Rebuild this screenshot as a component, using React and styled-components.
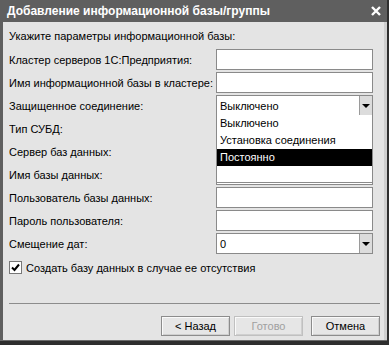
import React from "react";
import styled, { createGlobalStyle } from "styled-components";

const GlobalStyle = createGlobalStyle`
  html, body {
    margin: 0;
    padding: 0;
    background: #ffffff;
  }
  * {
    box-sizing: border-box;
  }
`;

const Shadow = styled.div`
  width: 389px;
  height: 345px;
  background: #2e2e2e;
  padding: 0 2px 4px 0;
  font-family: "Liberation Sans", Arial, sans-serif;
  font-size: 11px;
  color: #000;
`;

const Frame = styled.div`
  width: 100%;
  height: 100%;
  display: flex;
  flex-direction: column;
  background: #5f5f5f;
  border-bottom: 1px solid #6a6a6a;
`;

const TitleBar = styled.div`
  height: 22px;
  display: flex;
  align-items: center;
  justify-content: space-between;
  padding: 0 6px 0 7px;
  color: #fff;
  font-weight: bold;
  font-size: 12px;
`;

const Body = styled.div`
  flex: 1;
  display: flex;
  flex-direction: column;
  margin-left: 3px;
  border-right: 3px solid #cfcfcf;
  background: #e4e4e4;
  padding: 5px 8px 3px 6px;
`;

const Heading = styled.div`
  height: 18px;
  line-height: 18px;
  margin-bottom: 4px;
`;

const Form = styled.div`
  display: grid;
  grid-template-columns: minmax(0, 1fr) 157px;
  grid-auto-rows: 21px;
  row-gap: 2px;
  align-items: center;
  padding-right: 3px;
`;

const Label = styled.div`
  white-space: nowrap;
  overflow: hidden;
`;

const Field = styled.div`
  position: relative;
  height: 21px;
  background: #fff;
  border: 1px solid #8a8a8a;
  display: flex;
  align-items: center;
  padding-left: 3px;
`;

const FieldText = styled.span`
  flex: 1;
`;

const DropButton = styled.div`
  width: 13px;
  height: 100%;
  background: #dcdcdc;
  border-left: 1px solid #9a9a9a;
  display: flex;
  align-items: center;
  justify-content: center;
`;

const Arrow = styled.div`
  width: 0;
  height: 0;
  border-left: 4px solid transparent;
  border-right: 4px solid transparent;
  border-top: 4px solid #000;
`;

const List = styled.div`
  position: absolute;
  top: 100%;
  left: -1px;
  right: -1px;
  height: 68px;
  background: #fff;
  border: 1px solid #8a8a8a;
  border-top: none;
  z-index: 2;
`;

const Item = styled.div`
  height: 17px;
  line-height: 17px;
  padding-left: 3px;
  background: ${(p) => (p.$active ? "#000" : "transparent")};
  color: ${(p) => (p.$active ? "#fff" : "#000")};
`;

const CheckRow = styled.label`
  display: flex;
  align-items: center;
  gap: 4px;
  margin-top: 7px;
  height: 13px;
`;

const Box = styled.span`
  width: 13px;
  height: 13px;
  background: #fff;
  border: 1px solid #777;
  display: flex;
  align-items: center;
  justify-content: center;
`;

const Separator = styled.div`
  margin-top: auto;
  height: 1px;
  background: #8c8c8c;
  margin-right: -4px;
`;

const Buttons = styled.div`
  display: flex;
  justify-content: flex-end;
  margin-top: 12px;
  margin-right: -4px;
  margin-bottom: 1px;
`;

const Button = styled.button`
  width: 69px;
  height: 20px;
  margin-left: ${(p) => p.$gap}px;
  font: inherit;
  color: ${(p) => (p.disabled ? "#a0a0a0" : "#000")};
  background: #e6e6e6;
  border: 1px solid ${(p) => (p.disabled ? "#c0c0c0" : "#8c8c8c")};
  box-shadow: inset 1px 1px #fafafa, inset -1px -1px #cfcfcf;
  padding: 0;
`;

const rows = [
  { label: "Кластер серверов 1С:Предприятия:", field: true },
  { label: "Имя информационной базы в кластере:", field: true },
  { label: "Защищенное соединение:", combo: "Выключено", open: true },
  { label: "Тип СУБД:", field: true },
  { label: "Сервер баз данных:", field: true },
  { label: "Имя базы данных:", field: true },
  { label: "Пользователь базы данных:", field: true },
  { label: "Пароль пользователя:", field: true },
  { label: "Смещение дат:", combo: "0" },
];

const options = ["Выключено", "Установка соединения", "Постоянно"];

export default function App() {
  return (
    <>
      <GlobalStyle />
      <Shadow>
        <Frame>
          <TitleBar>
            <span>Добавление информационной базы/группы</span>
            <svg width="10" height="10" viewBox="0 0 10 10">
              <path d="M1 1 L9 9 M9 1 L1 9" stroke="#fff" strokeWidth="2.4" />
            </svg>
          </TitleBar>
          <Body>
            <Heading>Укажите параметры информационной базы:</Heading>
            <Form>
              {rows.map((r) => (
                <React.Fragment key={r.label}>
                  <Label>{r.label}</Label>
                  {r.combo !== undefined ? (
                    <Field>
                      <FieldText>{r.combo}</FieldText>
                      <DropButton>
                        <Arrow />
                      </DropButton>
                      {r.open && (
                        <List>
                          {options.map((o) => (
                            <Item key={o} $active={o === "Постоянно"}>
                              {o}
                            </Item>
                          ))}
                        </List>
                      )}
                    </Field>
                  ) : (
                    <Field />
                  )}
                </React.Fragment>
              ))}
            </Form>
            <CheckRow>
              <Box>
                <svg width="9" height="9" viewBox="0 0 9 9">
                  <path d="M1 4.5 L3.5 7 L8 1.5" stroke="#000" strokeWidth="2" fill="none" />
                </svg>
              </Box>
              Создать базу данных в случае ее отсутствия
            </CheckRow>
            <Separator />
            <Buttons>
              <Button $gap={0}>&lt; Назад</Button>
              <Button $gap={4} disabled>
                Готово
              </Button>
              <Button $gap={8}>Отмена</Button>
            </Buttons>
          </Body>
        </Frame>
      </Shadow>
    </>
  );
}
